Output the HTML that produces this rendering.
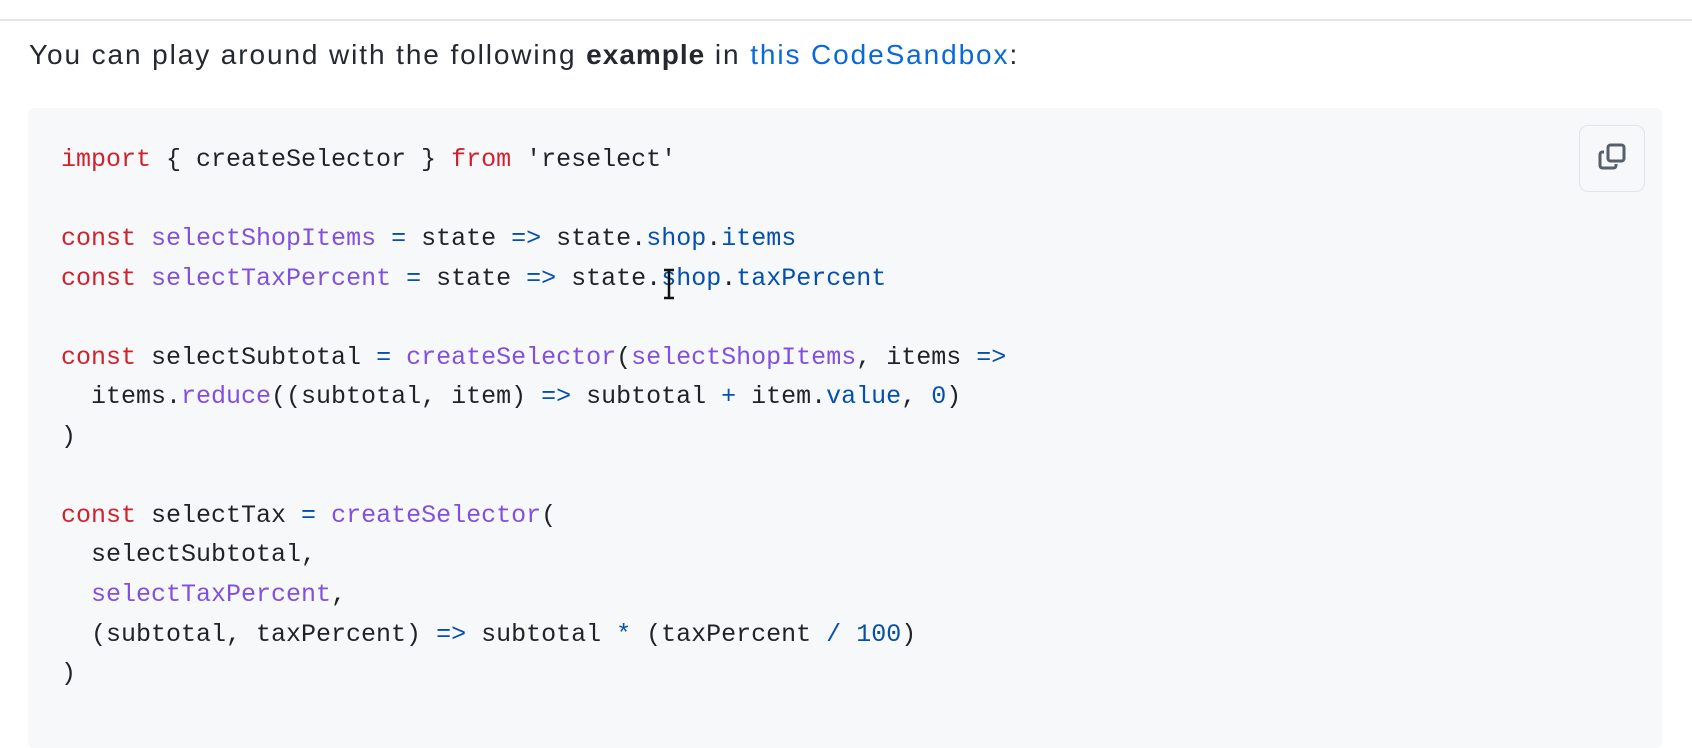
<!DOCTYPE html>
<html><head><meta charset="utf-8"><style>
html,body{margin:0;padding:0;background:#fff;width:1692px;height:718px;overflow:hidden;}
.hr{position:absolute;left:0;top:19px;width:1692px;height:2px;background:#e4e6e9;}
.p{position:absolute;left:29px;top:39px;font-family:"Liberation Sans",sans-serif;font-size:28px;letter-spacing:1.9px;color:#24292f;white-space:nowrap;}
.p b{font-weight:bold;letter-spacing:1px;} .p a{color:#0969da;text-decoration:none;}
.blk{position:absolute;left:28px;top:108px;width:1634px;height:640px;background:#f6f8fa;border-radius:6px;}
pre{position:absolute;left:61px;top:140px;margin:0;font-family:"Liberation Mono",monospace;font-size:25px;line-height:39.55px;color:#1f2328;}
.k{color:#cf222e}.f{color:#8250df}.c{color:#0550ae}.s{color:#1f2328}
.btn{position:absolute;left:1579px;top:125px;width:66px;height:67px;border:1px solid #e1e4e8;border-radius:9px;background:#f6f8fa;box-sizing:border-box;}
</style></head><body>
<div class="hr"></div>
<div class="p">You can play around with the following <b>example</b> in <a>this CodeSandbox</a>:</div>
<div class="blk"></div>
<pre><span class="k">import</span> { createSelector } <span class="k">from</span> <span class="s">'reselect'</span>

<span class="k">const</span> <span class="f">selectShopItems</span> <span class="c">=</span> state <span class="c">=&gt;</span> state.<span class="c">shop</span>.<span class="c">items</span>
<span class="k">const</span> <span class="f">selectTaxPercent</span> <span class="c">=</span> state <span class="c">=&gt;</span> state.<span class="c">shop</span>.<span class="c">taxPercent</span>

<span class="k">const</span> selectSubtotal <span class="c">=</span> <span class="f">createSelector</span>(<span class="f">selectShopItems</span>, items <span class="c">=&gt;</span>
  items.<span class="f">reduce</span>((subtotal, item) <span class="c">=&gt;</span> subtotal <span class="c">+</span> item.<span class="c">value</span>, <span class="c">0</span>)
)

<span class="k">const</span> selectTax <span class="c">=</span> <span class="f">createSelector</span>(
  selectSubtotal,
  <span class="f">selectTaxPercent</span>,
  (subtotal, taxPercent) <span class="c">=&gt;</span> subtotal <span class="c">*</span> (taxPercent <span class="c">/</span> <span class="c">100</span>)
)</pre>
<div class="btn"><svg width="66" height="67" viewBox="0 0 66 67" style="position:absolute;left:-1px;top:-1px"><g fill="none" stroke="#57606a" stroke-width="3" stroke-linejoin="round"><rect x="29" y="20" width="16" height="16" rx="2.5"/><path d="M25 27h-1.5a2.5 2.5 0 0 0-2.5 2.5v11a2.5 2.5 0 0 0 2.5 2.5h11a2.5 2.5 0 0 0 2.5-2.5V39"/></g></svg></div>
<svg style="position:absolute;left:661px;top:268px" width="16" height="32" viewBox="0 0 16 32"><path d="M3 2h10M8 2v28M3 30h10" stroke="#111" stroke-width="2.5" fill="none"/></svg>
</body></html>
